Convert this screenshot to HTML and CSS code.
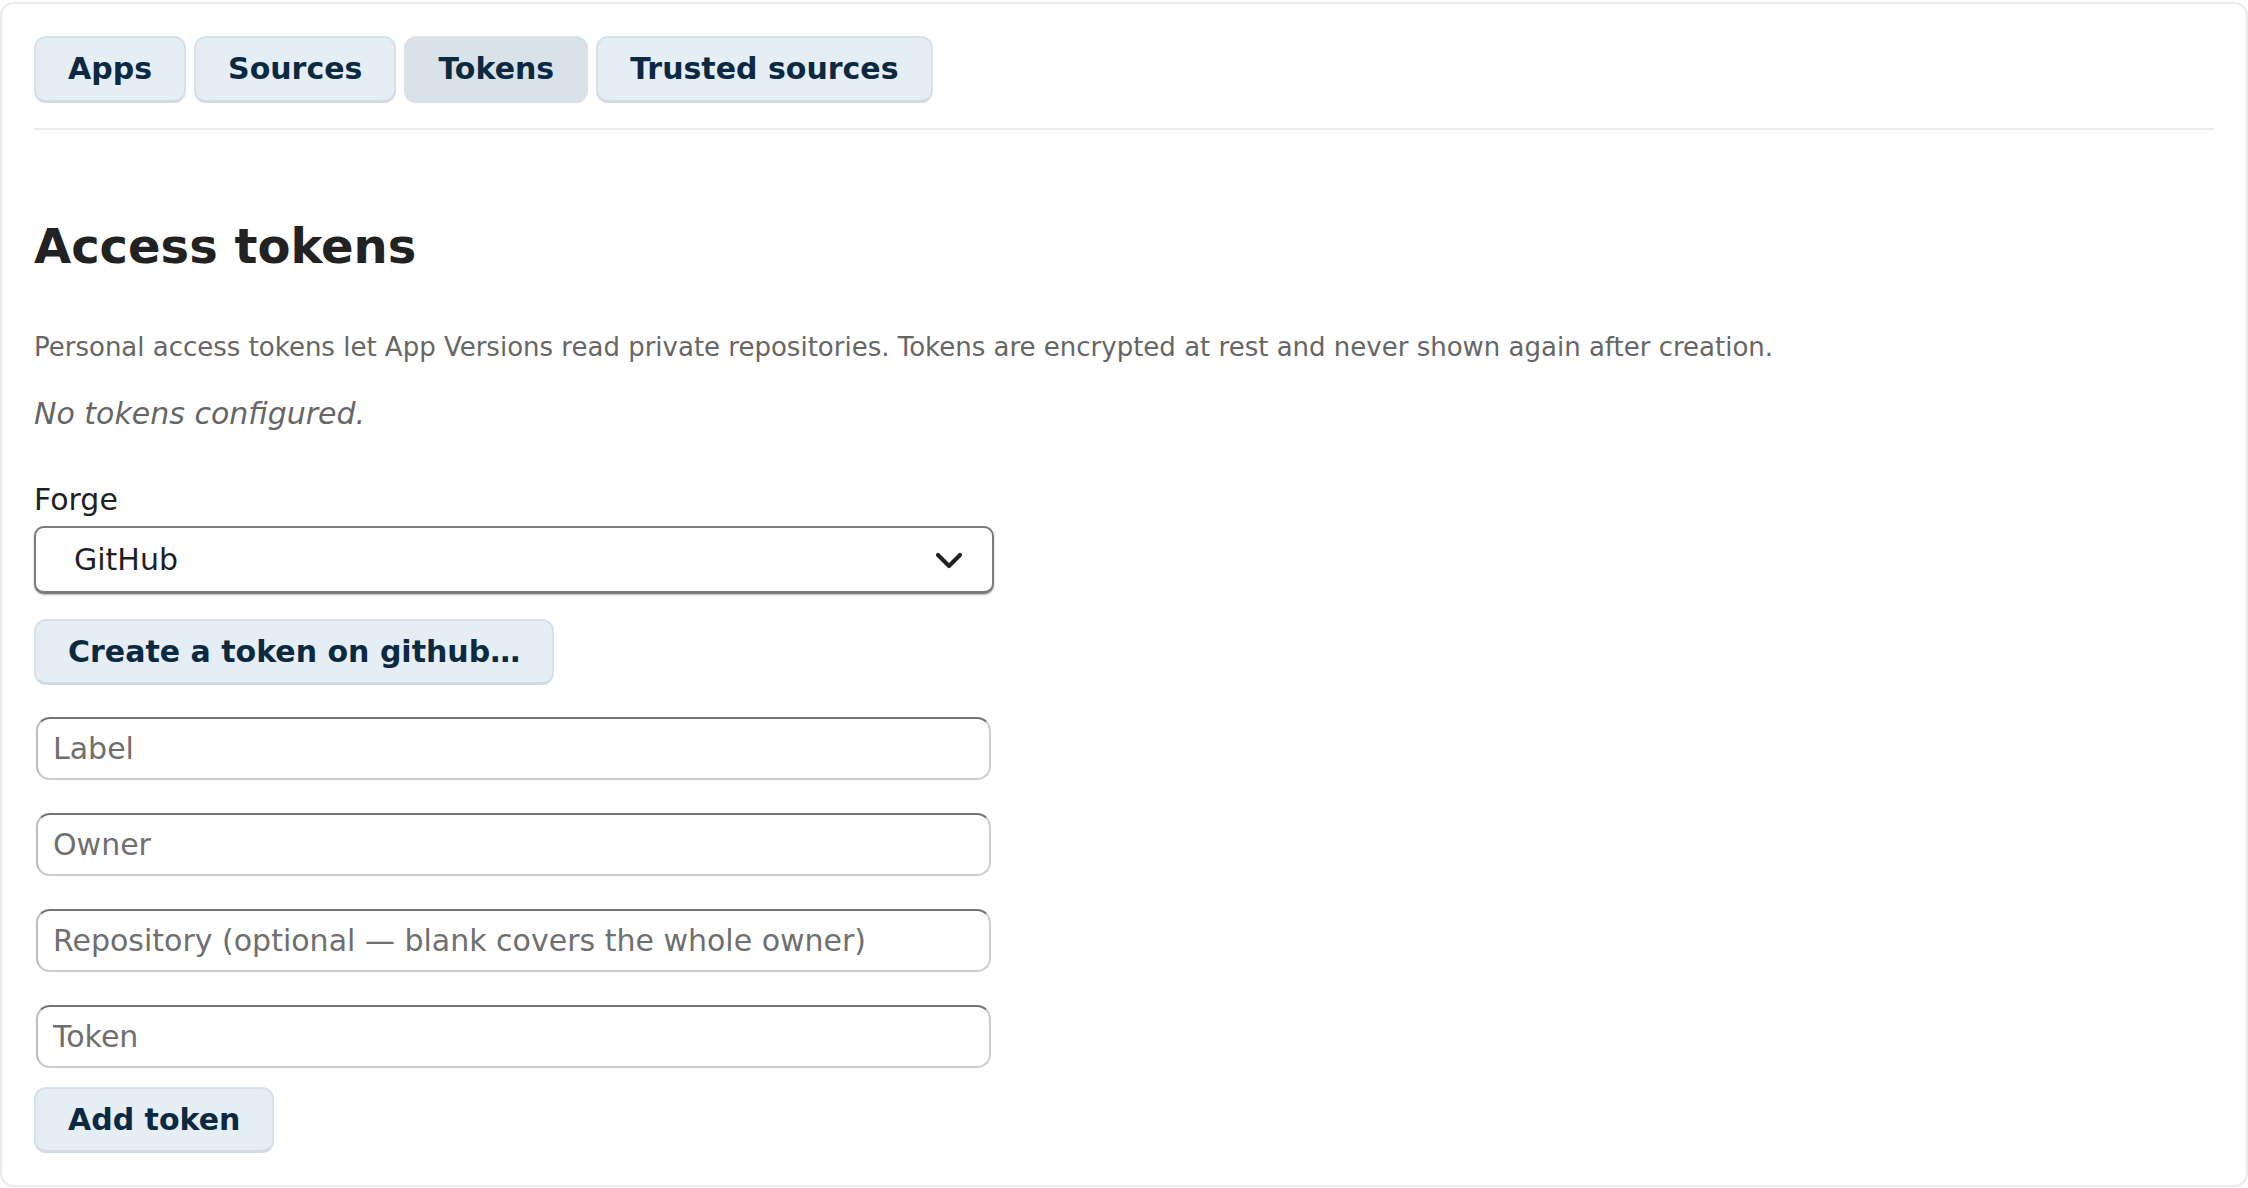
FILE: index.html
```html
<!DOCTYPE html>
<html lang="en">
<head>
<meta charset="utf-8">
<title>Access tokens</title>
<link rel="stylesheet" href="styles.css">
</head>
<body>
<main class="card">
  <nav class="tabs">
    <button class="btn">Apps</button>
    <button class="btn">Sources</button>
    <button class="btn active">Tokens</button>
    <button class="btn">Trusted sources</button>
  </nav>
  <h1 class="title">Access tokens</h1>
  <p class="lead">Personal access tokens let App Versions read private repositories. Tokens are encrypted at rest and never shown again after creation.</p>
  <p class="empty">No tokens configured.</p>
  <form class="form">
    <label class="field-label" for="forge">Forge</label>
    <div class="select-wrap">
      <select id="forge" class="select">
        <option>GitHub</option>
        <option>GitLab</option>
        <option>Gitea</option>
      </select>
      <svg class="chevron" viewBox="0 0 28 17" width="28" height="17" aria-hidden="true"><polyline points="3,3 14,14 25,3" fill="none" stroke="#222" stroke-width="4.2" stroke-linecap="round" stroke-linejoin="round"/></svg>
    </div>
    <button type="button" class="btn create">Create a token on github…</button>
    <input class="input first" type="text" placeholder="Label">
    <input class="input" type="text" placeholder="Owner">
    <input class="input" type="text" placeholder="Repository (optional — blank covers the whole owner)">
    <input class="input" type="password" placeholder="Token">
    <button type="button" class="btn add">Add token</button>
  </form>
</main>
</body>
</html>
```
FILE: styles.css
```css
* { box-sizing: border-box; }

html, body {
  margin: 0;
  padding: 0;
  background: #ffffff;
}

body {
  font-family: "DejaVu Sans", Verdana, sans-serif;
  color: #222222;
}

.card {
  margin-top: 2px;
  width: 100%;
  border: 2px solid #ebebeb;
  border-radius: 14px;
  padding: 32px;
  background: #ffffff;
}

.tabs {
  display: flex;
  gap: 8px;
  padding-bottom: 25px;
  border-bottom: 2px solid #ebebeb;
}

.btn {
  font-family: "DejaVu Sans", Verdana, sans-serif;
  font-weight: bold;
  font-size: 30px;
  color: #0b2940;
  background: #e5eef5;
  border: 2px solid #d6e1e9;
  border-bottom: 3px solid #d0dbe3;
  border-radius: 12px;
  height: 67px;
  padding: 0 32px;
  line-height: 1;
  cursor: pointer;
  display: block;
}

.btn.active {
  background: #d9e2e8;
  border-color: #d9e2e8;
}

.title {
  margin: 88px 0 0 0;
  font-size: 48px;
  line-height: 56px;
  font-weight: bold;
  color: #222222;
}

.lead {
  margin: 58px 0 0 0;
  font-size: 26px;
  line-height: 30px;
  color: #666666;
}

.empty {
  margin: 35px 0 0 0;
  font-size: 30px;
  line-height: 34px;
  font-style: italic;
  color: #666666;
}

.form {
  margin: 0;
}

.field-label {
  display: block;
  margin-top: 52px;
  font-size: 30px;
  line-height: 34px;
  color: #1f1f1f;
}

.select-wrap {
  position: relative;
  width: 960px;
  margin-top: 9px;
}

.select {
  appearance: none;
  -webkit-appearance: none;
  display: block;
  width: 960px;
  height: 68px;
  border: 2px solid #7b7b7b;
  border-bottom-width: 3px;
  border-radius: 10px;
  background: #ffffff;
  padding: 0 70px 0 38px;
  font-family: "DejaVu Sans", Verdana, sans-serif;
  font-size: 30px;
  color: #1f1f1f;
  box-shadow: 0 1px 2px rgba(0, 0, 0, 0.3);
  outline: none;
}

.chevron {
  position: absolute;
  right: 31px;
  top: 26px;
  pointer-events: none;
}

.create {
  margin-top: 25px;
  height: 66px;
}

.input {
  display: block;
  width: 955px;
  height: 63px;
  margin: 33px 0 0 2px;
  padding: 0 15px;
  border-width: 2px;
  border-style: solid;
  border-color: #767676 #cdcdcd #cdcdcd #bdbdbd;
  border-radius: 14px;
  background: #ffffff;
  font-family: "DejaVu Sans", Verdana, sans-serif;
  font-size: 30px;
  color: #1f1f1f;
  outline: none;
}

.input.first {
  margin-top: 32px;
}

.input::placeholder {
  color: #6f6f6f;
  opacity: 1;
}

.add {
  margin-top: 19px;
  height: 66px;
}
```
